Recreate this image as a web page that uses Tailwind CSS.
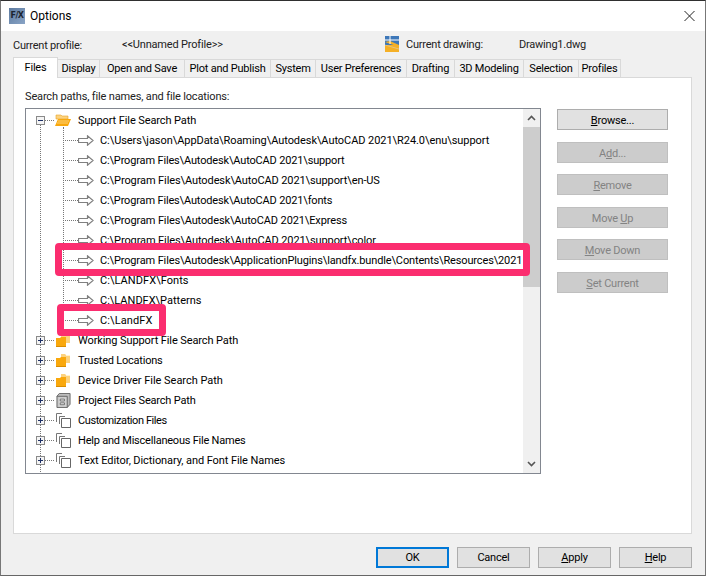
<!DOCTYPE html>
<html lang="en">
<head>
  <meta charset="UTF-8" />
  <title>Options</title>
  <script src="https://cdn.jsdelivr.net/npm/@tailwindcss/browser@4"></script>
</head>
<body class="bg-white">
  <!-- icon definitions -->
  <svg class="hidden">
    <symbol id="arrow" viewBox="0 0 16 11"><path d="M0.5 3.5H9.5V0.8L15 5.5L9.5 10.2V7.5H0.5Z" fill="#fff" stroke="#808080" stroke-width="1.2" /></symbol>
    <symbol id="folder" viewBox="0 0 15 15"><path d="M5 1H9L10 2H14V10H5Z" fill="#fcd27e"/><path d="M10 2h4v1H10z" fill="#fff3d0"/><path d="M0 5H4L5 4H10V14H0Z" fill="#f9a80d"/><path d="M0 13H10V14H0Z" fill="#d98c00"/></symbol>
    <symbol id="open" viewBox="0 0 16 12"><path d="M1 1H6L7 2H13V5H1Z" fill="#fcd27e" stroke="#e8a52a" stroke-width=".6"/><path d="M3 5H16L13 12H0Z" fill="#f9a80d"/><path d="M3 7H14M2 9H13" stroke="#fde3a7" stroke-width=".7"/></symbol>
    <symbol id="pages" viewBox="0 0 15 15"><path d="M0.5 9V0.5H6M3.5 11V3.5H9" fill="none" stroke="#777"/><path d="M5.5 5.5H14.5V14.5H5.5Z" fill="#fff" stroke="#666"/></symbol>
    <symbol id="box" viewBox="0 0 15 16"><path d="M3 .5H14.5V12L11.5 15.5H.5V3.5Z" fill="#bdbdbd" stroke="#666"/><path d="M.5 3.5H11.5V15.5" fill="none" stroke="#666"/><path d="M2 4.5H10.5V14.5H2Z" fill="#d2d2d2"/><path d="M4 6.5H8.5V8.5H4ZM4 10.5H8.5V12.5H4Z" fill="#eee" stroke="#555" stroke-width=".8"/></symbol>
  </svg>

  <div class="w-[706px] h-[576px] overflow-hidden border border-t-[#2f2f2f] border-x-[#777] border-b-[#666] bg-[#f0f0f0] text-[#111] text-[11px] tracking-[-0.22px] leading-[16px] font-['Roboto',sans-serif] flex flex-col relative">

    <!-- title bar -->
    <div class="h-[30px] bg-white shrink-0 flex items-center pl-[8px] pr-[10px]">
      <div class="w-4 h-4 bg-linear-to-br from-[#5d7ba0] to-[#8aa4c6] text-[8px] leading-[16px] tracking-[-0.6px] font-bold text-[#1c2430] text-center font-['DejaVu_Sans',sans-serif]">F/X</div>
      <span class="ml-[5px] text-[12px] tracking-normal text-black">Options</span>
      <svg class="ml-auto" width="11" height="10" viewBox="0 0 11 10"><path d="M.5 0 10.5 10M10.5 0 .5 10" stroke="#222" fill="none"/></svg>
    </div>

    <!-- profile row -->
    <div class="h-[26px] shrink-0 flex items-center text-[#222] relative">
      <span class="ml-[12px] w-[109px] mt-[3px]">Current profile:</span>
      <span class="w-[263px] mt-[2px] tracking-[-0.18px]">&lt;&lt;Unnamed Profile&gt;&gt;</span>
      <svg width="14" height="16" viewBox="0 0 14 16"><rect width="14" height="9" fill="#3d77b8"/><rect y="9" width="14" height="7" fill="#f5b027"/><path d="M0 6 14 11V16H14V9L5 5Z" fill="#f5b027"/><path d="M0 4H14M5 0V8" stroke="#fff" fill="none"/><path d="M0 9 14 13" stroke="#d7d7d7" stroke-width=".5"/></svg>
      <span class="ml-[7px] w-[113px] mt-[2px]">Current drawing:</span>
      <span class="mt-[2px]">Drawing1.dwg</span>
    </div>

    <!-- tabs -->
    <div class="h-[21px] shrink-0 ml-[12px] flex items-end relative z-10 text-black whitespace-nowrap">
      <div class="w-[45px] h-[21px] bg-white border border-b-0 border-[#d9d9d9] text-center pt-[2px]">Files</div>
      <div class="w-[42px] h-[19px] border border-l-0 border-[#d9d9d9] text-center pt-px">Display</div>
      <div class="w-[85px] h-[19px] border border-l-0 border-[#d9d9d9] text-center pt-px">Open and Save</div>
      <div class="w-[86px] h-[19px] border border-l-0 border-[#d9d9d9] text-center pt-px">Plot and Publish</div>
      <div class="w-[45px] h-[19px] border border-l-0 border-[#d9d9d9] text-center pt-px">System</div>
      <div class="w-[91px] h-[19px] border border-l-0 border-[#d9d9d9] text-center pt-px">User Preferences</div>
      <div class="w-[48px] h-[19px] border border-l-0 border-[#d9d9d9] text-center pt-px">Drafting</div>
      <div class="w-[69px] h-[19px] border border-l-0 border-[#d9d9d9] text-center pt-px">3D Modeling</div>
      <div class="w-[55px] h-[19px] border border-l-0 border-[#d9d9d9] text-center pt-px">Selection</div>
      <div class="w-[42px] h-[19px] border border-l-0 border-[#d9d9d9] text-center pt-px">Profiles</div>
    </div>

    <!-- tab panel -->
    <div class="ml-[12px] w-[679px] h-[457px] -mt-[1px] shrink-0 bg-white border border-[#d9d9d9] pl-[11px] pt-[10px] flex gap-[16px]">
      <div class="w-[516px]">
        <div class="h-[20px] pt-px text-[#222] tracking-[-0.15px]">Search paths, file names, and file locations:</div>

        <div class="h-[366px] border border-[#828790] flex relative">
          <!-- tree -->
          <div class="flex-1 pt-[1px] relative text-black overflow-hidden whitespace-nowrap">
            <div class="absolute left-[14px] top-[16px] h-[349px] border-l border-dotted border-[#777]"></div>
            <div class="absolute left-[37px] top-[18px] h-[202px] border-l border-dotted border-[#777]"></div>

            <div class="h-5 flex items-center pl-[10px] relative">
              <div class="w-[9px] h-[9px] border border-[#8a8a8a] bg-[#f4f4f4] flex items-center justify-center"><div class="w-[5px] h-px bg-[#1d2f66]"></div></div>
              <div class="w-[9px] border-t border-dotted border-[#777]"></div>
              <svg class="mr-[7px] ml-[1px]" width="16" height="12"><use href="#open"/></svg>
              <span class="mt-[2px] tracking-[-0.1px]">Support File Search Path</span>
            </div>
            <div id="paths"></div>
            <div id="groups"></div>
          </div>

          <!-- scrollbar -->
          <div class="w-[17px] bg-[#f0f0f0] flex flex-col items-center">
            <div class="h-[18px] flex items-center justify-center"><svg width="9" height="6" viewBox="0 0 9 6"><path d="M1 5 4.5 1.5 8 5" fill="none" stroke="#555" stroke-width="1.6"/></svg></div>
            <div class="w-full h-[160px] bg-[#cdcdcd]"></div>
            <div class="mt-auto h-[18px] flex items-center justify-center"><svg width="9" height="6" viewBox="0 0 9 6"><path d="M1 1 4.5 4.5 8 1" fill="none" stroke="#555" stroke-width="1.6"/></svg></div>
          </div>
        </div>
      </div>

      <!-- side buttons -->
      <div class="w-[111px] pt-[21px] flex flex-col text-center">
        <div class="h-[21px] pt-px bg-[#e1e1e1] border border-[#adadad] text-black leading-[19px]"><u>B</u>rowse...</div>
        <div class="h-[21px] pt-px mt-[12px] bg-[#cccccc] border border-[#bfbfbf] text-[#838383] leading-[19px]">A<u>d</u>d...</div>
        <div class="h-[21px] pt-px mt-[11px] bg-[#cccccc] border border-[#bfbfbf] text-[#838383] leading-[19px]"><u>R</u>emove</div>
        <div class="h-[21px] pt-px mt-[12px] bg-[#cccccc] border border-[#bfbfbf] text-[#838383] leading-[19px]">Move <u>U</u>p</div>
        <div class="h-[21px] pt-px mt-[11px] bg-[#cccccc] border border-[#bfbfbf] text-[#838383] leading-[19px]"><u>M</u>ove Down</div>
        <div class="h-[21px] pt-px mt-[12px] bg-[#cccccc] border border-[#bfbfbf] text-[#838383] leading-[19px]"><u>S</u>et Current</div>
      </div>
    </div>

    <!-- dialog buttons -->
    <div class="ml-[375px] mt-[13px] flex gap-[8px] text-center text-black">
      <div class="w-[73px] h-[21px] bg-[#e1e1e1] border-2 border-[#0078d7] leading-[17px]">OK</div>
      <div class="w-[73px] h-[21px] bg-[#e1e1e1] border border-[#adadad] leading-[19px]">Cancel</div>
      <div class="w-[73px] h-[21px] bg-[#e1e1e1] border border-[#adadad] leading-[19px]"><u>A</u>pply</div>
      <div class="w-[73px] h-[21px] bg-[#e1e1e1] border border-[#adadad] leading-[19px]"><u>H</u>elp</div>
    </div>

    <!-- pink callouts -->
    <div class="absolute left-[54px] top-[242px] w-[475px] h-[33px] border-[7px] border-[#fb2d6f] rounded-[4px]"></div>
    <div class="absolute left-[56px] top-[303px] w-[109px] h-[32px] border-[7px] border-[#fb2d6f] rounded-[4px]"></div>
  </div>

  <script>
    // per-row letter spacing, the small differences from Segoe UI vary by string
    const paths = [
      ["C:\\Users\\jason\\AppData\\Roaming\\Autodesk\\AutoCAD 2021\\R24.0\\enu\\support", "tracking-[-0.06px]"],
      ["C:\\Program Files\\Autodesk\\AutoCAD 2021\\support", "tracking-[-0.16px]"],
      ["C:\\Program Files\\Autodesk\\AutoCAD 2021\\support\\en-US", "tracking-[-0.1px]"],
      ["C:\\Program Files\\Autodesk\\AutoCAD 2021\\fonts", "tracking-[-0.16px]"],
      ["C:\\Program Files\\Autodesk\\AutoCAD 2021\\Express", "tracking-[-0.12px]"],
      ["C:\\Program Files\\Autodesk\\AutoCAD 2021\\support\\color", "tracking-[-0.1px]"],
      ["C:\\Program Files\\Autodesk\\ApplicationPlugins\\landfx.bundle\\Contents\\Resources\\2021", "tracking-[-0.14px]"],
      ["C:\\LANDFX\\Fonts", "tracking-[0.06px]"],
      ["C:\\LANDFX\\Patterns", "tracking-[0px]"],
      ["C:\\LandFX", "tracking-[0.1px]"],
    ];
    const groups = [
      ["folder", "Working Support File Search Path", "tracking-[-0.1px]"],
      ["folder", "Trusted Locations", "tracking-[-0.22px]"],
      ["folder", "Device Driver File Search Path", "tracking-[-0.02px]"],
      ["box", "Project Files Search Path", "tracking-[-0.18px]"],
      ["pages", "Customization Files", "tracking-[-0.42px]"],
      ["pages", "Help and Miscellaneous File Names", "tracking-[-0.22px]"],
      ["pages", "Text Editor, Dictionary, and Font File Names", "tracking-[-0.08px]"],
    ];

    document.getElementById("paths").innerHTML = paths.map(([p, t]) => `
      <div class="h-5 flex items-center pl-[37px]">
        <div class="w-[15px] shrink-0 border-t border-dotted border-[#777]"></div>
        <svg class="mr-[6px] shrink-0" width="16" height="11"><use href="#arrow"/></svg>
        <span class="mt-[2px] ${t}">${p}</span>
      </div>`).join("");

    document.getElementById("groups").innerHTML = groups.map(([icon, name, t]) => `
      <div class="h-5 flex items-center pl-[10px]">
        <div class="w-[9px] h-[9px] border border-[#8a8a8a] bg-[#f4f4f4] relative">
          <div class="absolute left-[1px] top-[3px] w-[5px] h-px bg-[#1d2f66]"></div>
          <div class="absolute left-[3px] top-[1px] w-px h-[5px] bg-[#1d2f66]"></div>
        </div>
        <div class="w-[9px] border-t border-dotted border-[#777]"></div>
        <svg class="ml-[2px] mr-[7px]" width="15" height="15"><use href="#${icon}"/></svg>
        <span class="mt-[2px] ${t}">${name}</span>
      </div>`).join("");
  </script>
</body>
</html>
